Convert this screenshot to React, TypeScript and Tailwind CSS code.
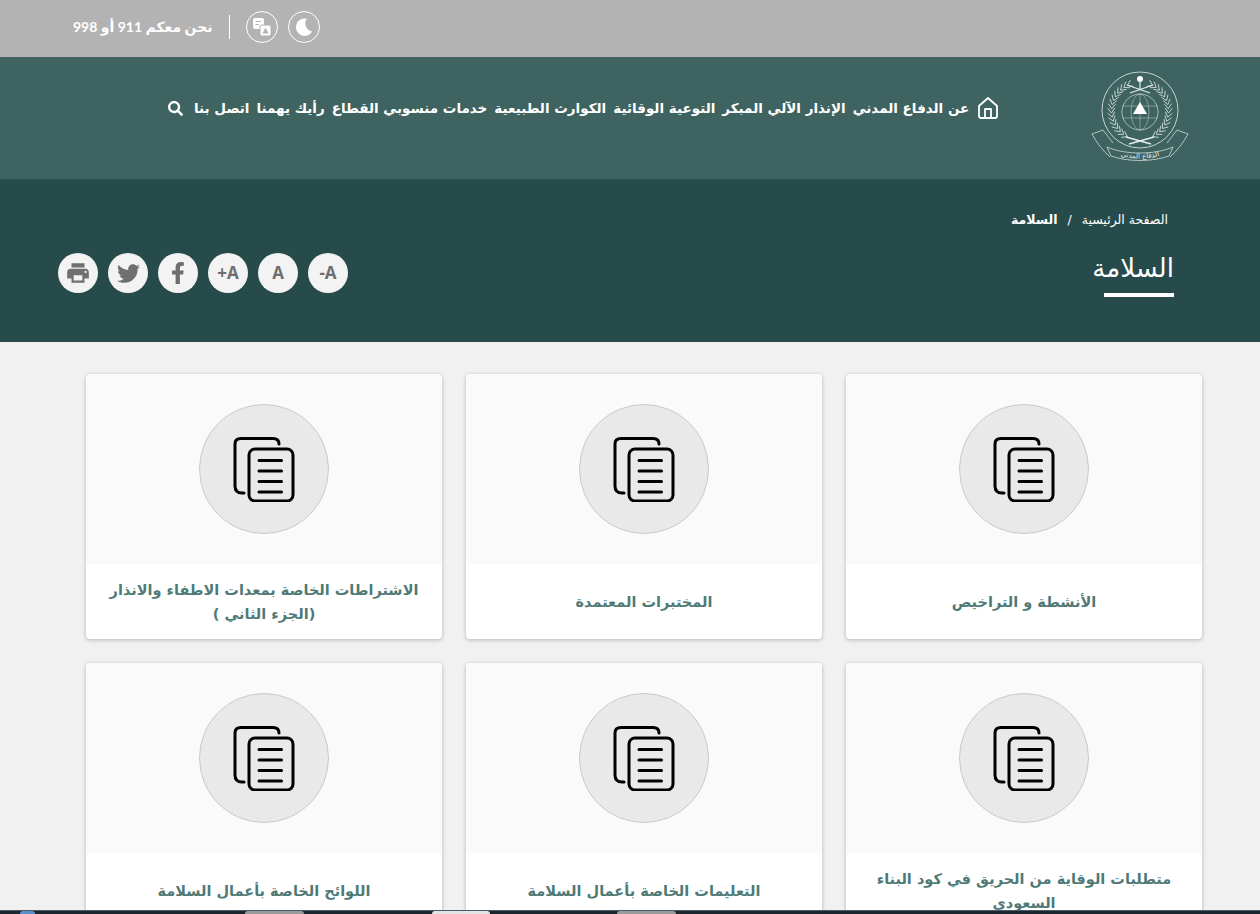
import React from 'react';
import { FaFacebookF, FaSearch, FaTwitter } from 'react-icons/fa';
import { MdPrint } from 'react-icons/md';

const arabic = "font-['DejaVu_Sans','Noto_Sans',sans-serif]";

const navItems = [
  'عن الدفاع المدني',
  'الإنذار الآلي المبكر',
  'التوعية الوقائية',
  'الكوارث الطبيعية',
  'خدمات منسوبي القطاع',
  'رأيك يهمنا',
  'اتصل بنا',
];

const cards = [
  'الأنشطة و التراخيص',
  'المختبرات المعتمدة',
  'الاشتراطات الخاصة بمعدات الاطفاء والانذار (الجزء الثاني )',
  'متطلبات الوقاية من الحريق في كود البناء السعودي',
  'التعليمات الخاصة بأعمال السلامة',
  'اللوائح الخاصة بأعمال السلامة',
];

const DocsIcon = () => (
  <svg width="62" height="66" viewBox="0 0 62 66" fill="none" stroke="#000" strokeWidth="3" strokeLinecap="round" strokeLinejoin="round">
    <path d="M46 8 C46 4 44 2.500 40 2.500 H8 C4 2.500 2 4.500 2 8 V50 C2 54.500 4.500 57 9 57 H11" />
    <rect x="16" y="13" width="44" height="52" rx="6" />
    <path d="M26 24.500 H48.500 M26 35 H48.500 M26 45.500 H48.500 M26 56 H48.500" />
  </svg>
);

// wreath leaves on both sides of the emblem, growing towards the top
const leaves = Array.from({ length: 16 }, (_, i) => 26 + i * 8.5);

const leafPath = (deg: number, side: number) => {
  const a = (deg * Math.PI) / 180;
  const x = 50 + side * 28.5 * Math.sin(a);
  const y = 41 - 28.5 * Math.cos(a);
  return [a - 0.95, a - 2.2]
    .map((d) => `M${x} ${y} L${x + side * 6 * Math.sin(d)} ${y - 6 * Math.cos(d)}`)
    .join(' ');
};

const Emblem = () => (
  <svg width="100" height="96" viewBox="0 0 100 96" fill="none" stroke="#e6eeec">
    <circle cx="50" cy="40" r="38" strokeWidth="0.8" />
    <circle cx="50" cy="42" r="18" strokeWidth="0.6" />
    <ellipse cx="50" cy="42" rx="9" ry="18" strokeWidth="0.4" />
    <path d="M32.500 36 H67.500 M32.500 48 H67.500 M50 24 V60" strokeWidth="0.4" />
    <path d="M50 32 L57 44 H43 Z" fill="#fff" stroke="none" />
    <circle cx="50" cy="9" r="3" fill="#fff" stroke="none" />
    <path d="M50 12 V20 M37 15 L60 23 M63 15 L40 23" strokeWidth="1.200" />
    {leaves.map((deg) => (
      <g key={deg} strokeWidth="0.8">
        <path d={leafPath(deg, 1)} />
        <path d={leafPath(deg, -1)} />
      </g>
    ))}
    <path d="M36 67 L61 74 M64 67 L39 74" strokeWidth="1.400" />
    <path d="M2 64 L13 60 L23 73 M2 64 C7 73 13 81 20 87" strokeWidth="0.7" />
    <path d="M98 64 L87 60 L77 73 M98 64 C93 73 87 81 80 87" strokeWidth="0.7" />
    <path d="M17 77 C35 85 65 85 83 77 L79 86 C62 92 38 92 21 86 Z" fill="#3e6360" strokeWidth="0.7" />
    <path id="ribbon" d="M24 84 C40 90 60 90 76 84" stroke="none" />
    <text fontSize="7" fill="#e6eeec" stroke="none" textAnchor="middle">
      <textPath href="#ribbon" startOffset="50%">الدفاع المدني</textPath>
    </text>
  </svg>
);

const Card = ({ title }: { title: string }) => (
  <a className="flex h-[265px] flex-col overflow-hidden rounded bg-white shadow-[0_1px_4px_rgba(0,0,0,0.25)]">
    <div className="flex h-[190px] items-center justify-center bg-[#fafafa]">
      <div className="flex h-[130px] w-[130px] items-center justify-center rounded-full border border-[#c9c9c9] bg-[#e9e9e9]">
        <DocsIcon />
      </div>
    </div>
    <div className="flex flex-1 items-center justify-center px-5 text-center text-[14.500px] font-bold leading-6 text-[#4f7a76]">
      {title}
    </div>
  </a>
);

const ToolButton = ({ children }: { children: React.ReactNode }) => (
  <button dir="ltr" className="flex h-10 w-10 items-center justify-center rounded-full bg-[#f3f3f3] font-['Open_Sans',sans-serif] text-[17px] font-bold text-[#6f6f6f]">
    {children}
  </button>
);

export default function App() {
  return (
    <div dir="rtl" className={`${arabic} relative h-[914px] overflow-hidden bg-[#f1f1f1]`}>
      <div className="flex h-[57px] items-center justify-end bg-[#b3b3b3] pb-1 pl-[73px]">
        <div className="flex items-center gap-2.5">
          <div className="flex h-8 w-8 items-center justify-center rounded-full border border-white">
            <svg width="22" height="22" viewBox="0 0 24 24" fill="#fff">
              <path d="M15 3 A9.500 9.500 0 1 0 21 17 A9 9 0 0 1 15 3 Z" />
            </svg>
          </div>
          <div className="flex h-8 w-8 items-center justify-center rounded-full border border-white">
            <svg width="22" height="22" viewBox="0 0 22 22" fill="#fff">
              <rect x="2" y="2" width="11" height="11" rx="2" />
              <rect x="9" y="9" width="11" height="11" rx="2" stroke="#b3b3b3" />
              <path d="M14.500 11.500 L17.500 17.500 H11.500 Z" fill="#b3b3b3" />
              <path d="M4.500 5.500 H10 M4.500 8.500 H8" stroke="#b3b3b3" strokeWidth="1.200" />
            </svg>
          </div>
          <div className="mx-1.5 h-6 w-px bg-white" />
          <span className="font-['Lato','DejaVu_Sans',sans-serif] text-[14px] font-bold text-white">نحن معكم 911 أو 998</span>
        </div>
      </div>

      <div className="flex h-[123px] items-center justify-between border-b border-[#2f5250] bg-[#3e6360] pr-[70px] pl-[168px]">
        <Emblem />
        <nav className="flex items-center gap-[7px] pb-5 text-[13.500px] font-bold whitespace-nowrap text-white">
          <svg className="ml-[1px]" width="22" height="24" viewBox="0 0 22 24" fill="none" stroke="#fff" strokeWidth="1.800" strokeLinejoin="round">
            <path d="M2 10 L11 2 L20 10 V20 C20 21.500 19 22 18 22 H4 C3 22 2 21.500 2 20 Z" />
            <path d="M8 22 V13 H14 V22" />
          </svg>
          {navItems.map((item) => (
            <a key={item}>{item}</a>
          ))}
          <FaSearch className="mr-1 text-[15px]" />
        </nav>
      </div>

      <div className="flex h-[162px] items-start justify-between bg-[#274a4a] pr-[86px] pl-[58px]">
        <div className="pt-8 text-white">
          <div className="flex gap-2.5 pb-[25px] pr-1.5 text-[12.500px] leading-[15px]">
            <span>الصفحة الرئيسية</span>
            <span>/</span>
            <span className="font-bold">السلامة</span>
          </div>
          <h1 className="w-[70px] border-b-4 border-white pb-[9px] text-[26px] leading-8 whitespace-nowrap">السلامة</h1>
        </div>
        <div className="mt-[73px] flex gap-2.5">
          <ToolButton>-A</ToolButton>
          <ToolButton>A</ToolButton>
          <ToolButton>+A</ToolButton>
          <ToolButton><FaFacebookF className="text-[22px]" /></ToolButton>
          <ToolButton><FaTwitter className="text-[23px]" /></ToolButton>
          <ToolButton><MdPrint className="text-[26px]" /></ToolButton>
        </div>
      </div>

      <div className="grid grid-cols-3 gap-6 pt-8 pr-[58px] pl-[86px]">
        {cards.map((title) => (
          <Card key={title} title={title} />
        ))}
      </div>

      {/* strip of the browser's taskbar caught at the bottom edge */}
      <div dir="ltr" className="absolute inset-x-0 bottom-0 flex h-1 border-t border-[#4d5b66] bg-[#1c262c]">
        <div className="ml-[20px] h-full w-[15px] rounded-t-full bg-[#5b8fc9]" />
        <div className="ml-[210px] h-full w-[59px] rounded-t-sm bg-[#9a9a9a]" />
        <div className="ml-[128px] h-full w-[58px] rounded-t-sm bg-[#e4e4e4]" />
        <div className="ml-[127px] h-full w-[59px] rounded-t-sm bg-[#9a9a9a]" />
      </div>
    </div>
  );
}
